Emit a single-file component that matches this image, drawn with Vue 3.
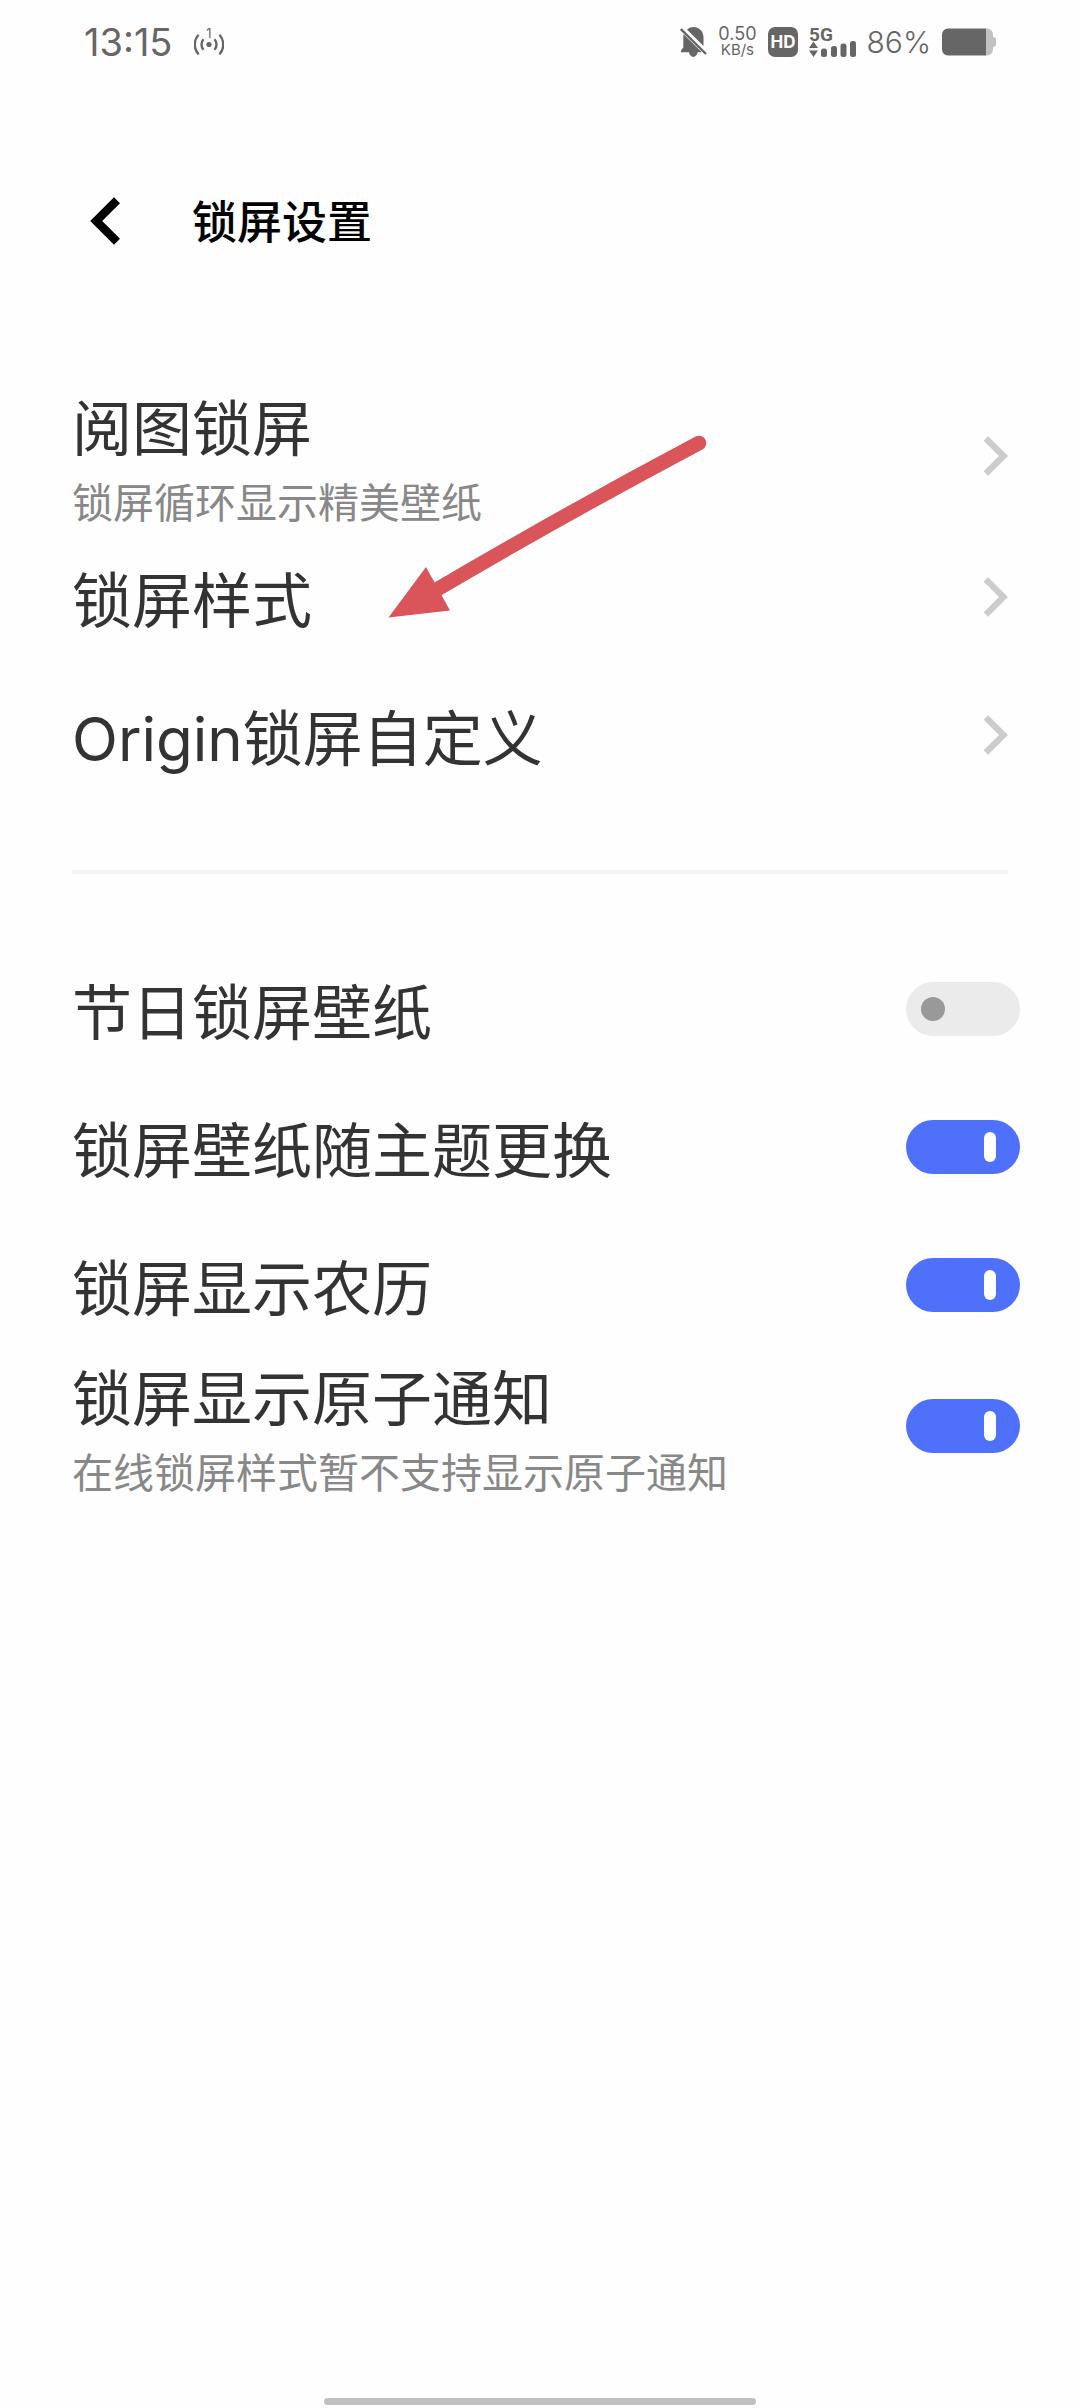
<script setup>
import { ref } from 'vue'

const links = [
  { id: 'gallery', title: '阅图锁屏', note: '锁屏循环显示精美壁纸' },
  { id: 'style', title: '锁屏样式' },
  { id: 'origin', title: 'Origin锁屏自定义' },
]

const switches = ref([
  { id: 'festival', title: '节日锁屏壁纸', on: false },
  { id: 'theme', title: '锁屏壁纸随主题更换', on: true },
  { id: 'lunar', title: '锁屏显示农历', on: true },
  { id: 'atomic', title: '锁屏显示原子通知', note: '在线锁屏样式暂不支持显示原子通知', on: true },
])
</script>

<template>
  <div class="screen">
    <div class="status">
      <span class="clock">13:15</span>
      <svg class="hotspot" width="30" height="36" viewBox="0 0 30 36" fill="none" stroke="#666" stroke-width="2.4">
        <circle cx="15" cy="20.5" r="2.6" fill="#666" stroke="none" />
        <path d="M9.5 15.2a8 8 0 0 0 0 10.6M20.5 15.2a8 8 0 0 1 0 10.6M4.6 10.8a14.5 14.5 0 0 0 0 19.6M25.4 10.8a14.5 14.5 0 0 1 0 19.6" />
        <text x="15" y="14" text-anchor="middle" font-size="13" fill="#666" stroke="none">1</text>
      </svg>
      <div class="indicators">
        <svg width="27" height="30" viewBox="0 0 27 30" fill="#666">
          <path d="M7.5 2.3C9.3 .8 11.4 0 13.5 0C19 0 23.5 4.4 23.5 10V19L7.2 2.7ZM3.6 7.2L21.8 25.3H17.6C17 28 15.5 30 13.3 30C11 30 9.5 28 9 25.3H1V23.5L3.3 20.5V10C3.3 9 3.4 8 3.6 7.2Z" />
          <path d="M.8 2L26 27" stroke="#666" stroke-width="2.4" fill="none" />
        </svg>
        <div class="speed"><span class="rate">0.50</span><span class="unit">KB/s</span></div>
        <svg width="30" height="30" viewBox="0 0 30 30">
          <rect width="30" height="30" rx="7" fill="#666" />
          <text x="15" y="21" text-anchor="middle" font-size="17" font-weight="700" fill="#fefefe">HD</text>
        </svg>
        <svg width="47" height="40" viewBox="0 -5 47 40" fill="#666">
          <text class="network" x="0" y="14" font-size="19" font-weight="700">5G</text>
          <path d="M4.5 14.5L9 21H0ZM4.5 30L9 23.5H0Z" />
          <rect x="12" y="21.5" width="6" height="8.5" rx="2.5" />
          <rect x="22" y="19" width="6" height="11" rx="2.5" />
          <rect x="31.5" y="16.5" width="6" height="13.5" rx="2.5" />
          <rect x="41" y="14" width="6" height="16" rx="2.5" />
        </svg>
        <span class="percent">86%</span>
        <svg width="54" height="28" viewBox="0 0 54 28">
          <path d="M44 .5h1a6 6 0 0 1 6 6v2.5c2 0 3 1 3 2.5v5c0 1.5-1 2.5-3 2.5v2.5a6 6 0 0 1-6 6h-1z" fill="#c2c2c2" />
          <path d="M6 .5h38v27H6a6 6 0 0 1-6-6v-15a6 6 0 0 1 6-6z" fill="#666" />
        </svg>
      </div>
    </div>

    <header class="header">
      <button class="back" type="button" aria-label="返回">
        <svg width="34" height="50" viewBox="0 0 34 50" fill="none" stroke="#000" stroke-width="8.5">
          <path d="M27 4.2L6.2 25L27 45.8" />
        </svg>
      </button>
      <h1>锁屏设置</h1>
    </header>

    <main>
      <nav class="group">
        <a v-for="item in links" :key="item.id" class="row" href="#">
          <span class="text">
            <span class="title">{{ item.title }}</span>
            <span v-if="item.note" class="note">{{ item.note }}</span>
          </span>
          <svg class="chevron" width="24" height="40" viewBox="0 0 24 40" fill="none" stroke="#ccc" stroke-width="6.4">
            <path d="M1.9 2.4L19.5 20L1.9 37.6" />
          </svg>
        </a>
        <svg class="pointer" width="320" height="184" viewBox="0 0 320 184">
          <path d="M48 156Q179 79 311 9" fill="none" stroke="#da555a" stroke-width="14.5" stroke-linecap="round" />
          <path d="M.5 183.5L38 133L62 176.5Z" fill="#da555a" />
        </svg>
      </nav>
      <hr class="divider" />
      <section class="group">
        <label v-for="item in switches" :key="item.id" class="row" :for="item.id">
          <span class="text">
            <span class="title">{{ item.title }}</span>
            <span v-if="item.note" class="note">{{ item.note }}</span>
          </span>
          <input :id="item.id" v-model="item.on" class="switch" type="checkbox" role="switch" />
        </label>
      </section>
    </main>

    <div class="home"></div>
  </div>
</template>

<style>
body {
  margin: 0;
  background: #fefefe;
}
</style>

<style scoped>
.screen {
  box-sizing: border-box;
  display: flex;
  flex-direction: column;
  min-height: 100vh;
  background: #fefefe;
  color: #333;
  font-family: Inter, "Noto Sans CJK SC", sans-serif;
}

svg {
  display: block;
  flex: none;
}

.status {
  display: flex;
  align-items: center;
  height: 84px;
  padding: 0 84px;
  color: #666;
}

.clock {
  font-size: 38px;
  line-height: 40px;
}

.hotspot {
  margin-left: 22px;
}

.indicators {
  display: flex;
  align-items: center;
  gap: 11px;
  margin-left: auto;
}

.network {
  font-family: Roboto, sans-serif;
}

.speed {
  display: flex;
  flex-direction: column;
  align-items: center;
}

.rate {
  font-size: 18px;
  line-height: 16px;
}

.unit {
  font-size: 15px;
  line-height: 16px;
}

.percent {
  font-size: 30px;
  font-weight: 300;
  line-height: 40px;
}

.header {
  display: flex;
  align-items: center;
  gap: 68px;
  padding: 96px 90px 122px;
}

.back {
  display: flex;
  align-items: center;
  height: 82px;
  padding: 0;
  border: 0;
  background: none;
}

h1 {
  margin: 0;
  padding-top: 4px;
  color: #000;
  font-size: 45px;
  font-weight: 500;
  line-height: 74px;
}

main {
  flex: 1;
}

.group {
  position: relative;
}

.row {
  display: flex;
  align-items: center;
  justify-content: space-between;
  min-height: 138px;
  padding: 0 60px 0 72px;
  color: inherit;
  text-decoration: none;
}

.text {
  display: flex;
  flex-direction: column;
  gap: 12px;
  padding-top: 8px;
}

.title {
  font-size: 60px;
  line-height: 74px;
}

.note {
  color: #888;
  font-size: 41px;
  line-height: 50px;
}

.chevron {
  margin-right: 12px;
}

.pointer {
  position: absolute;
  top: 50px;
  left: 388px;
}

.divider {
  height: 4px;
  margin: 66px 72px;
  border: 0;
  background: #f4f4f4;
}

.switch {
  display: flex;
  flex: none;
  align-items: center;
  box-sizing: border-box;
  width: 114px;
  height: 54px;
  margin: 0;
  padding: 0 24px 0 15px;
  border-radius: 27px;
  background: #ebebeb;
  appearance: none;
}

.switch::before {
  width: 24px;
  height: 24px;
  border-radius: 12px;
  background: #999;
  content: "";
}

.switch:checked {
  justify-content: flex-end;
  background: #4f70fa;
}

.switch:checked::before {
  width: 12px;
  height: 30px;
  border-radius: 6px;
  background: #fefefe;
}

.home {
  width: 40%;
  height: 7px;
  margin: 0 auto 3px;
  border-radius: 4px;
  background: #c1c1c1;
}
</style>
